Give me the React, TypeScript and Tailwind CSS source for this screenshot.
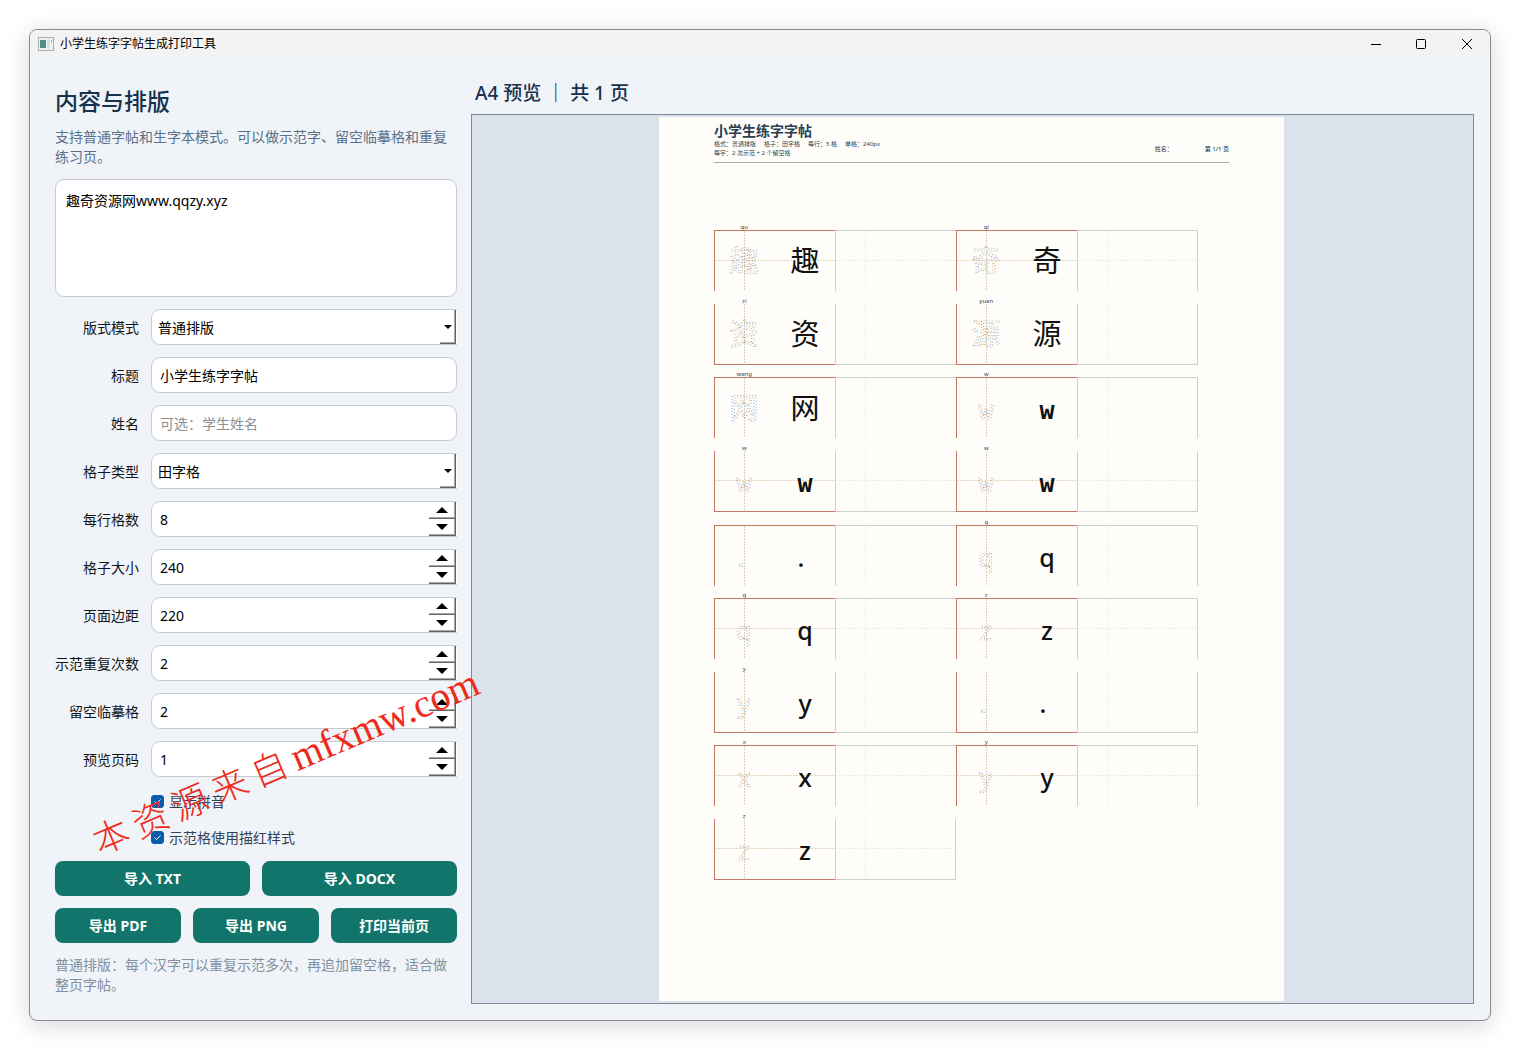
import { useState } from "react";
import type { ReactNode } from "react";
import clsx from "clsx";

const KAI = "'KaiTi', 'Noto Sans', 'Noto Sans CJK SC', sans-serif";
const MONO = "'DejaVu Sans Mono', monospace";

const rows = [
  { line: "top", cross: true, items: [["趣", "qu"], ["奇", "qi"]] },
  { line: "bottom", cross: false, items: [["资", "zi"], ["源", "yuan"]] },
  { line: "top", cross: false, items: [["网", "wang"], ["w", "w"]] },
  { line: "bottom", cross: true, items: [["w", "w"], ["w", "w"]] },
  { line: "top", cross: false, items: [[".", ""], ["q", "q"]] },
  { line: "top", cross: true, items: [["q", "q"], ["z", "z"]] },
  { line: "bottom", cross: false, items: [["y", "y"], [".", ""]] },
  { line: "top", cross: true, items: [["x", "x"], ["y", "y"]] },
  { line: "bottom", cross: true, items: [["z", "z"]] },
];

const inputClass = "min-w-0 flex-1 bg-transparent pt-0.5 pl-2 text-sm text-black outline-none placeholder:text-[#8b8f96]";
const bevel = "border-r border-b border-[#636363] shadow-[inset_-1px_-1px_0_#a8a8a8]";

function Field({ id, label, children }: { id: string; label: string; children: ReactNode }) {
  return (
    <div className="flex items-center gap-3">
      <label htmlFor={id} className="w-[84px] shrink-0 pt-0.5 text-right text-sm whitespace-nowrap text-[#111418]">
        {label}
      </label>
      {children}
    </div>
  );
}

function TextField({ id, label, value, placeholder }: { id: string; label: string; value?: string; placeholder?: string }) {
  return (
    <Field id={id} label={label}>
      <div className="flex h-9 min-w-0 flex-1 rounded-[9px] border border-[#c5c9d0] bg-white">
        <input id={id} type="text" defaultValue={value} placeholder={placeholder} className={inputClass} />
      </div>
    </Field>
  );
}

function SelectField({ id, label, options }: { id: string; label: string; options: string[] }) {
  return (
    <Field id={id} label={label}>
      <div className="relative flex h-9 min-w-0 flex-1 rounded-l-[9px] border border-r-0 border-[#c5c9d0] bg-white">
        <select id={id} className="min-w-0 flex-1 appearance-none bg-transparent pt-0.5 pl-[6px] text-sm text-black outline-none">
          {options.map((o) => (
            <option key={o}>{o}</option>
          ))}
        </select>
        <span className={clsx("pointer-events-none absolute inset-y-0 right-px flex w-4 items-center justify-center", bevel)}>
          <svg width="8" height="4" viewBox="0 0 8 4">
            <path d="M0 0h8L4 4z" />
          </svg>
        </span>
      </div>
    </Field>
  );
}

function NumberField({ id, label, initial }: { id: string; label: string; initial: number }) {
  const [value, setValue] = useState(initial);
  const step = clsx("flex flex-1 items-center justify-center", bevel);
  return (
    <Field id={id} label={label}>
      <div className="flex h-9 min-w-0 flex-1 rounded-l-[9px] border border-r-0 border-[#c5c9d0] bg-white pr-px">
        <input
          id={id}
          type="number"
          value={value}
          onChange={(e) => setValue(Number(e.target.value))}
          className={clsx(inputClass, "[appearance:textfield] [&::-webkit-inner-spin-button]:appearance-none")}
        />
        <div className="flex w-[27px] flex-col">
          <button type="button" aria-label={`${label} +`} className={step} onClick={() => setValue(value + 1)}>
            <svg width="12" height="6" viewBox="0 0 12 6">
              <path d="M0 6h12L6 0z" />
            </svg>
          </button>
          <button type="button" aria-label={`${label} -`} className={step} onClick={() => setValue(value - 1)}>
            <svg width="12" height="6" viewBox="0 0 12 6">
              <path d="M0 0h12L6 6z" />
            </svg>
          </button>
        </div>
      </div>
    </Field>
  );
}

function CheckField({ id, label }: { id: string; label: string }) {
  return (
    <div className="flex h-6 items-center gap-[5px] pl-24">
      <span className="relative flex">
        <input id={id} type="checkbox" defaultChecked className="peer h-[13px] w-[13px] appearance-none rounded-[3px] border border-[#0a5cad] checked:bg-[#0a5cad]" />
        <svg className="pointer-events-none absolute inset-0 hidden peer-checked:block" width="13" height="13" viewBox="0 0 13 13" fill="none" stroke="#fff">
          <path d="M3.5 6.5l2 2 4-4" />
        </svg>
      </span>
      <label htmlFor={id} className="pt-0.5 text-sm text-[#334155]">
        {label}
      </label>
    </div>
  );
}

function ActionButton({ children }: { children: ReactNode }) {
  return (
    <button type="button" className="h-[35px] flex-1 rounded-lg bg-[#11756b] text-sm font-bold text-white">
      {children}
    </button>
  );
}

type PracticeProps = { char: string; pinyin: string; line: string; cross: boolean; last: boolean };

// one demo box (traced + solid glyph) followed by one empty box
function Practice({ char, pinyin, line, cross, last }: PracticeProps) {
  const edge = line === "top" ? "border-t" : "border-b";
  const wide = char.charCodeAt(0) > 255;
  const glyph = {
    y: wide ? 41 : 41,
    textAnchor: "middle" as const,
    fontSize: wide ? 29 : 25,
    fontFamily: char === "w" ? MONO : KAI,
  };
  const weight = char === "w" ? 700 : wide ? 400 : 500;
  return (
    <div className="relative flex h-full w-1/2">
      <span className="absolute -top-[7px] left-0 w-1/4 text-center text-[6px] leading-[8px] text-[#334155]">{pinyin}</span>
      <div className={clsx("relative flex w-1/2 border-l border-[#c4785f]", edge)}>
        <svg className="absolute inset-0 h-full w-full" fill="none">
          <path d="M29.5 0v61" stroke="#d8cfb4" strokeDasharray="2 1" />
          {cross && <path d="M0 29.5h121" stroke="#e2d8bd" strokeDasharray="2 1" />}
          <text {...glyph} x={char === "." ? 26 : 29} stroke="#666" strokeWidth="0.6" strokeDasharray="1 2">
            {char}
          </text>
          <text {...glyph} x={char === "." ? 86 : 90} fontWeight={weight} fill="#111">
            {char}
          </text>
        </svg>
      </div>
      <div className={clsx("relative w-1/2 border-l border-[#cfcfcf]", edge, last && "border-r")}>
        <svg className="absolute inset-0 h-full w-full" fill="none" stroke="#f0ede6" strokeDasharray="2 1">
          <path d="M29.5 0v61" />
          {cross && <path d="M0 29.5h121" />}
        </svg>
      </div>
    </div>
  );
}

function Sheet() {
  return (
    <article className="flex aspect-[625/884] w-[625px] max-w-full flex-col bg-[#fffdfa] px-[55px] text-[#2c3e50]">
      <header className="flex items-center justify-between border-b border-[#aaaaaa] pt-[5px] pb-1">
        <div>
          <h3 className="text-sm leading-[18px] font-bold">小学生练字字帖</h3>
          <p className="flex gap-2 text-[6px] leading-[9px]">
            <span>格式：普通排版</span>
            <span>格子：田字格</span>
            <span>每行：5 格</span>
            <span>单格：240px</span>
          </p>
          <p className="text-[6px] leading-[9px]">每字：2 次示范 + 2 个留空格</p>
        </div>
        <div className="flex gap-8 pt-[18px] text-[6px] leading-[9px]">
          <span>姓名：</span>
          <span className="font-medium">第 1/1 页</span>
        </div>
      </header>
      <div className="mt-[67px] mr-[31px] flex h-[650px] flex-col justify-between">
        {rows.map((r, i) => (
          <div key={i} className="flex h-[61px]">
            {r.items.map(([char, pinyin], j) => (
              <Practice key={j} char={char} pinyin={pinyin} line={r.line} cross={r.cross} last={j === r.items.length - 1} />
            ))}
          </div>
        ))}
      </div>
    </article>
  );
}

function TitleBar() {
  return (
    <header className="flex h-7 items-center rounded-t-lg bg-[#f3f3f3] pl-2">
      <svg width="16" height="14" viewBox="0 0 16 14">
        <rect x="0.5" y="0.5" width="15" height="13" fill="#eef1f1" stroke="#a9b0b2" />
        <rect x="2" y="3" width="6" height="8" fill="#4f8f86" />
        <rect x="9" y="3" width="3" height="8" fill="#d5e0e0" />
        <rect x="13" y="3" width="1" height="3" fill="#9fb5b5" />
      </svg>
      <h1 className="pl-[6px] text-xs text-black">小学生练字字帖生成打印工具</h1>
      <div className="ml-auto flex">
        <button type="button" aria-label="最小化" className="flex w-[45px] justify-center">
          <svg width="12" height="12" viewBox="0 0 12 12" fill="none" stroke="#000">
            <path d="M1 6.5h10" />
          </svg>
        </button>
        <button type="button" aria-label="最大化" className="flex w-[45px] justify-center">
          <svg width="12" height="12" viewBox="0 0 12 12" fill="none" stroke="#000">
            <rect x="1.5" y="1.5" width="9" height="9" rx="1" />
          </svg>
        </button>
        <button type="button" aria-label="关闭" className="flex w-[47px] justify-center">
          <svg width="12" height="12" viewBox="0 0 12 12" fill="none" stroke="#000">
            <path d="M1 1l10 10M11 1L1 11" />
          </svg>
        </button>
      </div>
    </header>
  );
}

export default function App() {
  return (
    <div className="flex min-h-screen bg-white p-[29px] font-['Noto_Sans','Noto_Sans_CJK_SC',sans-serif]">
      <div className="relative flex flex-1 flex-col rounded-lg border border-[#8a8a8a] bg-[#f0f4f8] shadow-[0_4px_24px_rgba(0,0,0,0.16)]">
        <TitleBar />
        <main className="flex flex-1 gap-[14px] pr-4 pb-4 pl-[25px]">
          <form className="flex w-[402px] shrink-0 flex-col gap-3 pt-[29px]" onSubmit={(e) => e.preventDefault()}>
            <h2 className="text-[23px] leading-7 font-medium text-[#16324f]">内容与排版</h2>
            <p className="text-sm leading-5 text-[#5b7089]">支持普通字帖和生字本模式。可以做示范字、留空临摹格和重复练习页。</p>
            <textarea
              aria-label="内容"
              defaultValue="趣奇资源网www.qqzy.xyz"
              className="h-[118px] resize-none rounded-[9px] border border-[#c5c9d0] bg-white px-[10px] py-[11px] text-sm leading-5 text-black outline-none"
            />
            <SelectField id="mode" label="版式模式" options={["普通排版", "生字本"]} />
            <TextField id="title" label="标题" value="小学生练字字帖" />
            <TextField id="student" label="姓名" placeholder="可选：学生姓名" />
            <SelectField id="grid" label="格子类型" options={["田字格", "米字格"]} />
            <NumberField id="columns" label="每行格数" initial={8} />
            <NumberField id="size" label="格子大小" initial={240} />
            <NumberField id="margin" label="页面边距" initial={220} />
            <NumberField id="repeat" label="示范重复次数" initial={2} />
            <NumberField id="blank" label="留空临摹格" initial={2} />
            <NumberField id="page" label="预览页码" initial={1} />
            <CheckField id="pinyin" label="显示拼音" />
            <CheckField id="trace" label="示范格使用描红样式" />
            <div className="flex gap-3">
              <ActionButton>导入 TXT</ActionButton>
              <ActionButton>导入 DOCX</ActionButton>
            </div>
            <div className="flex gap-3">
              <ActionButton>导出 PDF</ActionButton>
              <ActionButton>导出 PNG</ActionButton>
              <ActionButton>打印当前页</ActionButton>
            </div>
            <p className="text-sm leading-5 text-[#8390a0]">普通排版：每个汉字可以重复示范多次，再追加留空格，适合做整页字帖。</p>
          </form>

          <section className="flex min-w-0 flex-1 flex-col pt-[21px]">
            <h2 className="pb-[7px] pl-1 text-[19px] leading-7 font-medium text-[#16324f]">
              A4 预览 <span className="font-bold">｜</span> 共 1 页
            </h2>
            <div className="flex flex-1 justify-center border border-[#7f8a99] bg-[#dae2eb] py-[2px] pr-[2px]">
              <Sheet />
            </div>
          </section>
        </main>

        <div className="pointer-events-none absolute top-[708px] left-[48px] flex -rotate-[23deg] items-baseline gap-[7px] font-['Liberation_Serif','Noto_Sans_CJK_SC',serif] text-4xl leading-[48px] font-light whitespace-nowrap text-[#ee2a1b]">
          <span>本</span>
          <span>资</span>
          <span>源</span>
          <span>来</span>
          <span>自</span>
          <span className="text-[40px]">mfxmw.com</span>
        </div>
      </div>
    </div>
  );
}
